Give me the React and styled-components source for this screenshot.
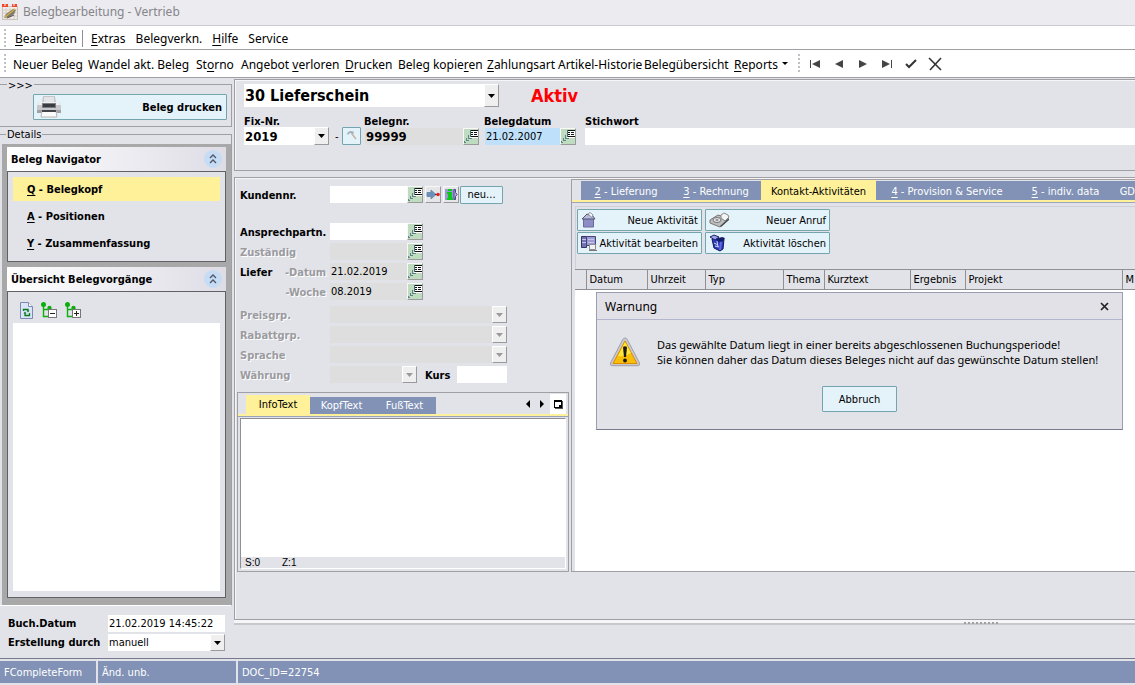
import React, { useState } from "react";
import styled, { createGlobalStyle } from "styled-components";

const menuItems = ["_Bearbeiten", "_Extras", "Belegverkn.", "_Hilfe", "Service"];

const toolItems = [
  { label: "Neuer Beleg", width: 75 },
  { label: "Wa_ndel akt. Beleg", width: 108 },
  { label: "St_orno", width: 45 },
  { label: "Angebot _verloren", width: 104 },
  { label: "_Drucken", width: 53 },
  { label: "Beleg kopie_ren", width: 89 },
  { label: "_Zahlungsart", width: 71 },
  { label: "Artikel-Historie", width: 86 },
  { label: "Belegübersicht", width: 90 },
];

const navItems = ["_Q - Belegkopf", "_A - Positionen", "_Y - Zusammenfassung"];

const tabItems = [
  { label: "_2 - Lieferung", width: 90 },
  { label: "_3 - Rechnung", width: 90 },
  { label: "Kontakt-Aktivitäten", width: 115 },
  { label: "_4 - Provision & Service", width: 142 },
  { label: "_5 - indiv. data", width: 95 },
  { label: "GD" },
];

const columns = [
  { label: "", width: 11 },
  { label: "Datum", width: 61 },
  { label: "Uhrzeit", width: 58 },
  { label: "Typ", width: 78 },
  { label: "Thema", width: 41 },
  { label: "Kurztext", width: 86 },
  { label: "Ergebnis", width: 55 },
  { label: "Projekt", width: 157 },
  { label: "M" },
];

// underlines the letter that follows "_"
function Accel({ text }) {
  const at = text.indexOf("_");
  if (at < 0) return <span>{text}</span>;
  return (
    <span>
      {text.slice(0, at)}
      <u>{text[at + 1]}</u>
      {text.slice(at + 2)}
    </span>
  );
}

function AppIcon() {
  return (
    <svg width="16" height="16" viewBox="0 0 16 16" aria-hidden="true">
      <path d="M0 2h16v14H0z" fill="#c9c2bb" />
      <path d="M1 3h14v12H1z" fill="#efebe6" />
      <path d="M0 0h6v3H0zM10 0h5v3h-5z" fill="#f04a2a" />
      <path d="M3 0v2M12 0v2" stroke="#fff" />
      <path d="M1 6h14M1 9h14M1 12h14M4 4v11M8 4v11M12 4v11" stroke="#d6cec6" />
      <path d="M2 14l2-4 7-5 3 1-2 4-5 3z" fill="#7d7a70" />
      <path d="M3 13l5-4 5-4" stroke="#d6b13c" strokeWidth="1.500" fill="none" />
      <path d="M5 14l7-3" stroke="#55504a" />
    </svg>
  );
}

function PrinterIcon() {
  return (
    <svg width="24" height="22" viewBox="0 0 24 22" aria-hidden="true">
      <path d="M6 0h12l1 7H5z" fill="#c4c6ca" />
      <path d="M7 1h10v5H7z" fill="#e2e4e7" />
      <path d="M2 6h20l2 4v6H0v-6z" fill="#c6c8cb" />
      <path d="M2 6h20l1 3H1z" fill="#eff0f2" />
      <path d="M5 7h14v5H5z" fill="#7a7d83" />
      <path d="M6 8h12v3H6z" fill="#3a3c41" />
      <path d="M0 14h24v3H0z" fill="#9fa1a5" />
      <path d="M5 15h14l1 6H4z" fill="#fbfbfc" stroke="#b4b6ba" />
      <path d="M5 14h14v2H5z" fill="#43464c" />
    </svg>
  );
}

function LookupIcon() {
  return (
    <svg width="14" height="15" viewBox="0 0 14 15" shapeRendering="crispEdges" aria-hidden="true">
      <path d="M6 1h8v8H6z" fill="#fff" />
      <path d="M6 1h8v1H6zM7 3h2v1H7zM10 3h3v1h-3zM7 5h2v1H7zM10 5h3v1h-3zM6 7h8v1H6z" fill="#111" />
      <path d="M6 1h1v7H6z" fill="#4a6c70" />
      <path d="M4 6h1v4H4zM5 9h3v1H5zM2 9h1v3H2zM3 11h2v1H3zM0 12h1v2H0zM1 13h1v1H1z" fill="#5d8588" />
    </svg>
  );
}

function ArrowDotIcon() {
  return (
    <svg width="14" height="15" viewBox="0 0 14 15" aria-hidden="true">
      <path d="M1 5.500h4V3l5 4.500-5 4.500V9.500H1z" fill="#6b8fb8" stroke="#6f8fb0" />
      <path d="M9 7.500h3" stroke="#333" />
      <circle cx="12" cy="7.500" r="1.800" fill="#d22" />
    </svg>
  );
}

function InfoIcon() {
  return (
    <svg width="14" height="15" viewBox="0 0 14 15" aria-hidden="true">
      <path d="M1 2h9v11H1z" fill="#9a99d0" />
      <path d="M10 2.500h1.500v3l1.500 2-1.500 2v3H10z" fill="#b8b8e4" stroke="#444488" />
      <path d="M4 2h4v2H4zM3 5h5v6h1v2H3v-2h1V7H3z" fill="#0cc81c" />
    </svg>
  );
}

function ToolIcon() {
  return (
    <svg width="12" height="12" viewBox="0 0 12 12" aria-hidden="true">
      <path d="M1 4q1-3 4-3 3 0 3 2L6 5 5 3Q3 3 2 5z" fill="#a3b4bc" />
      <path d="M6 4l4 5" stroke="#c4b4a6" strokeWidth="1.500" />
    </svg>
  );
}

function ChevronsUp() {
  return (
    <svg width="8" height="10" viewBox="0 0 8 10" aria-hidden="true">
      <path d="M1 4l3-3 3 3M1 9l3-3 3 3" fill="none" stroke="#4b5668" strokeWidth="1.300" />
    </svg>
  );
}

function RefreshDocIcon() {
  return (
    <svg width="13" height="17" viewBox="0 0 13 17" aria-hidden="true">
      <path d="M.5.5h8l4 4v12H.5z" fill="#d9e5f8" stroke="#7e88b0" />
      <path d="M8.500.5v4h4" fill="#fff" stroke="#7e88b0" />
      <path d="M3.500 9V7.500H8V9M9.500 11v2.500H5V11" fill="none" stroke="#0b7a1c" strokeWidth="1.300" />
      <path d="M6.500 8.500h3L8 10.500zM3.500 11.500h3L5 9.500z" fill="#0b7a1c" />
    </svg>
  );
}

function TreeIcon({ plus }) {
  return (
    <svg width="16" height="17" viewBox="0 0 16 17" aria-hidden="true">
      <path d="M2.500 3v11.500H7M2.500 7.500H8" stroke="#0fae0f" strokeWidth="1.400" fill="none" />
      <circle cx="2.500" cy="2.500" r="2.500" fill="#0fae0f" />
      <circle cx="8.500" cy="6" r="2.200" fill="#0fae0f" />
      <rect x="7.500" y="7.500" width="8" height="8" fill="#fff" stroke="#777" />
      <path d="M9 11.500h5" stroke="#222" />
      {plus && <path d="M11.500 9v5" stroke="#222" />}
    </svg>
  );
}

function NewTaskIcon() {
  return (
    <svg width="16" height="18" viewBox="0 0 16 18" aria-hidden="true">
      <path d="M2.500 7h10v9h-10z" fill="#8d8dc6" stroke="#6a6aa0" />
      <path d="M1 8l5-5 2 1h3l3 4H4z" fill="#b9bbdc" stroke="#50546c" />
      <path d="M7 3l2-1.500 3 2.500-1 2.500z" fill="#fff" stroke="#8b8fa5" />
    </svg>
  );
}

function EditTaskIcon() {
  return (
    <svg width="16" height="18" viewBox="0 0 16 18" aria-hidden="true">
      <path d="M.5 2.500h5v11h-5z" fill="#7474b4" stroke="#33335f" />
      <path d="M5.500 2.500h9v9h-9z" fill="#9c9cd2" stroke="#444478" />
      <path d="M1 5.500h4M1 8.500h4M7 5.500h6M7 8.500h6" stroke="#c4c4ec" />
      <path d="M8.500 10.500h6v5h-6z" fill="#f3f3f3" stroke="#8b8b90" />
      <path d="M8 16.500h8" stroke="#777" />
    </svg>
  );
}

function PhoneIcon() {
  return (
    <svg width="21" height="18" viewBox="0 0 21 18" aria-hidden="true">
      <path d="M1 9l8-5 9 3v3l-7 6L1 12z" fill="#bdbdbd" stroke="#777" />
      <path d="M12 4l3-2 4 2 1 2-4 4-4-3z" fill="#f4f4f4" stroke="#888" />
      <ellipse cx="8" cy="9" rx="4" ry="2.500" fill="#e4e4e4" stroke="#777" />
      <ellipse cx="8" cy="9" rx="1.500" ry="1" fill="#888" />
      <path d="M11 15l9-8v2l-8 7z" fill="#4a4a4a" />
    </svg>
  );
}

function BinIcon() {
  return (
    <svg width="18" height="18" viewBox="0 0 18 18" aria-hidden="true">
      <path d="M3 5l2 9 6 3 3-2 1-10-6-1z" fill="#2c39b8" stroke="#131a5c" />
      <path d="M1 3l4-2 5 2-4 3z" fill="#9aa1e4" stroke="#1c2470" />
      <path d="M7 5l6-2 3 1-2 3-5 1z" fill="#141c68" />
      <path d="M5 9l4 2M6 12l4 1M8 7l1 6" stroke="#cdd4ff" />
      <path d="M12 8l-1 8" stroke="#5b68e4" strokeWidth="2" />
    </svg>
  );
}

function WarningIcon() {
  return (
    <svg width="32" height="30" viewBox="0 0 32 30" aria-hidden="true">
      <path d="M16 1q1.500 0 2.300 1.600L30.500 26q.8 2.500-1.500 2.700H3Q.7 28.500 1.500 26L13.700 2.600Q14.500 1 16 1z" fill="#c9c9cc" stroke="#a0a0a6" />
      <path d="M16 4L28 26.500H4z" fill="#f8bf08" stroke="#e08a00" />
      <path d="M16 5l6 11q-6 4-13 3z" fill="#ffe83a" />
      <path d="M14 10q2-1.500 4 0l-1 10h-2z" fill="#1c1c1c" />
      <circle cx="16" cy="23.500" r="1.900" fill="#1c1c1c" />
    </svg>
  );
}

function NavIcon({ kind }) {
  const shapes = {
    first: <path d="M3 4h1v8H3zM5 8l8-4v8z" fill="#444" />,
    prev: <path d="M4 8l8-4v8z" fill="#444" />,
    next: <path d="M4 4l8 4-8 4z" fill="#444" />,
    last: <path d="M3 4l8 4-8 4zM12 4h1v8h-1z" fill="#444" />,
    ok: <path d="M3 8l3 3 7-7" fill="none" stroke="#333" strokeWidth="2" />,
    cancel: (
      <g fill="none" stroke="#333" strokeWidth="1.600">
        <path d="M2 2l12 12" />
        <path d="M14 2L3 14" />
      </g>
    ),
  };
  return (
    <svg width="16" height="16" viewBox="0 0 16 16" aria-hidden="true">
      {shapes[kind]}
    </svg>
  );
}

function Combo({ label, value, disabled, width, height, size, bold }) {
  return (
    <ComboBox $width={width} $height={height}>
      <ComboSelect aria-label={label} disabled={disabled} $size={size} $bold={bold}>
        <option>{value}</option>
      </ComboSelect>
      <ComboArrow>
        <svg width="7" height="4" viewBox="0 0 7 4" aria-hidden="true">
          <path d="M0 0h7L3.500 4z" fill={disabled ? "#9a9a9a" : "#000"} />
        </svg>
      </ComboArrow>
    </ComboBox>
  );
}

function Lookup({ label }) {
  return (
    <LookupButton type="button" aria-label={label}>
      <LookupIcon />
    </LookupButton>
  );
}

function App() {
  const [nav, setNav] = useState(0);
  const [tab, setTab] = useState(2);
  const [open, setOpen] = useState(true);

  return (
    <Page>
      <GlobalStyle />
      <TitleBar>
        <AppIcon />
        <h1>Belegbearbeitung - Vertrieb</h1>
      </TitleBar>
      <MenuBar>
        <Grip />
        {menuItems.map((item, i) => (
          <React.Fragment key={item}>
            <MenuItem type="button">
              <Accel text={item} />
            </MenuItem>
            {i === 0 && <MenuDivider />}
          </React.Fragment>
        ))}
      </MenuBar>
      <ToolBar>
        <Grip />
        {toolItems.map((item) => (
          <ToolItem key={item.label} type="button" $width={item.width}>
            <Accel text={item.label} />
          </ToolItem>
        ))}
        <ToolItem type="button" $width={64}>
          <Accel text="_Reports" />
          <svg width="6" height="4" viewBox="0 0 6 4" aria-hidden="true">
            <path d="M0 0h6L3 3z" />
          </svg>
        </ToolItem>
        <Grip />
        <RecordNav>
          {["first", "prev", "next", "last", "ok", "cancel"].map((kind) => (
            <button key={kind} type="button" aria-label={kind}>
              <NavIcon kind={kind} />
            </button>
          ))}
        </RecordNav>
      </ToolBar>

      <Main>
        <Side>
          <PrintGroup>
            <legend>&gt;&gt;&gt;</legend>
            <PrintButton type="button">
              <PrinterIcon />
              Beleg drucken
            </PrintButton>
          </PrintGroup>
          <DetailGroup>
            <legend>Details</legend>
            <Explorer>
              <section>
                <GroupHead>
                  <h2>Beleg Navigator</h2>
                  <button type="button" aria-label="Einklappen">
                    <ChevronsUp />
                  </button>
                </GroupHead>
                <NavBody>
                  {navItems.map((item, i) => (
                    <NavItem
                      key={item}
                      type="button"
                      $active={nav === i}
                      onClick={() => setNav(i)}
                    >
                      <Accel text={item} />
                    </NavItem>
                  ))}
                </NavBody>
              </section>
              <TreeSection>
                <GroupHead>
                  <h2>Übersicht Belegvorgänge</h2>
                  <button type="button" aria-label="Einklappen">
                    <ChevronsUp />
                  </button>
                </GroupHead>
                <TreeBody>
                  <TreeTools>
                    <button type="button" aria-label="Aktualisieren">
                      <RefreshDocIcon />
                    </button>
                    <button type="button" aria-label="Zuklappen">
                      <TreeIcon />
                    </button>
                    <button type="button" aria-label="Aufklappen">
                      <TreeIcon plus />
                    </button>
                  </TreeTools>
                  <TreeBox />
                </TreeBody>
              </TreeSection>
            </Explorer>
          </DetailGroup>
          <SideFooter>
            <Label htmlFor="buch">Buch.Datum</Label>
            <Field id="buch" defaultValue="21.02.2019 14:45:22" />
            <Label as="span">Erstellung durch</Label>
            <Combo label="Erstellung durch" value="manuell" height={17} />
          </SideFooter>
        </Side>

        <Content>
          <HeadPanel>
            <HeadRow>
              <Combo label="Belegart" value="30 Lieferschein" width={255} height={23} size={16} bold />
              <State>Aktiv</State>
            </HeadRow>
            <HeadFields>
              <Label as="span">Fix-Nr.</Label>
              <span />
              <Label htmlFor="nr">Belegnr.</Label>
              <Label htmlFor="datum">Belegdatum</Label>
              <Label htmlFor="stich">Stichwort</Label>
              <Combo label="Fix-Nr." value="2019" height={18} size={13} bold />
              <DashCell>
                <span>-</span>
                <SmallButton type="button" aria-label="Nummer ändern">
                  <ToolIcon />
                </SmallButton>
              </DashCell>
              <FieldCell $end={5}>
                <Field id="nr" defaultValue="99999" $tone="grey" $bold />
                <Lookup label="Belegnr. suchen" />
              </FieldCell>
              <FieldCell $end={9}>
                <Field id="datum" defaultValue="21.02.2007" $tone="blue" />
                <Lookup label="Datum wählen" />
              </FieldCell>
              <Field id="stich" />
            </HeadFields>
          </HeadPanel>

          <WorkPanel>
            <LeftPane>
              <Form>
                <FormRow $gap={20}>
                  <Label htmlFor="kunde">Kundennr.</Label>
                  <Field id="kunde" $width={77} />
                  <Lookup label="Kunde suchen" />
                  <FlatButton type="button" aria-label="Gehe zu">
                    <ArrowDotIcon />
                  </FlatButton>
                  <FlatButton type="button" aria-label="Info">
                    <InfoIcon />
                  </FlatButton>
                  <NewButton type="button">neu...</NewButton>
                </FormRow>
                <FormRow>
                  <Label htmlFor="partner">Ansprechpartn.</Label>
                  <Field id="partner" $width={77} />
                  <Lookup label="Ansprechpartner suchen" />
                </FormRow>
                <FormRow>
                  <Label htmlFor="zust" $muted>Zuständig</Label>
                  <Field id="zust" $width={77} $tone="grey" />
                  <Lookup label="Zuständig suchen" />
                </FormRow>
                <FormRow>
                  <SplitLabel>
                    <Label as="span">Liefer</Label>
                    <Label htmlFor="ldatum" $muted>-Datum</Label>
                  </SplitLabel>
                  <Field id="ldatum" defaultValue="21.02.2019" $width={77} $tone="grey" />
                  <Lookup label="Lieferdatum wählen" />
                </FormRow>
                <FormRow $gap={6}>
                  <SplitLabel>
                    <span />
                    <Label htmlFor="woche" $muted>-Woche</Label>
                  </SplitLabel>
                  <Field id="woche" defaultValue="08.2019" $width={77} $tone="grey" />
                  <Lookup label="Woche wählen" />
                </FormRow>
                {["Preisgrp.", "Rabattgrp.", "Sprache"].map((name) => (
                  <FormRow key={name}>
                    <Label as="span" $muted>{name}</Label>
                    <Combo label={name} disabled width={177} height={17} />
                  </FormRow>
                ))}
                <FormRow>
                  <Label as="span" $muted>Währung</Label>
                  <Combo label="Währung" disabled width={87} height={17} />
                  <RateLabel htmlFor="kurs">Kurs</RateLabel>
                  <Field id="kurs" $width={50} />
                </FormRow>
              </Form>

              <MemoPanel>
                <MemoTabs>
                  <MemoTab type="button" $active>InfoText</MemoTab>
                  <MemoTab type="button">KopfText</MemoTab>
                  <MemoTab type="button">FußText</MemoTab>
                  <MemoTools>
                    <MemoArrow type="button" aria-label="Zurück">
                      <svg width="5" height="8" viewBox="0 0 5 8"><path d="M4 0v8L0 4z" /></svg>
                    </MemoArrow>
                    <MemoArrow type="button" aria-label="Weiter">
                      <svg width="5" height="8" viewBox="0 0 5 8"><path d="M1 0v8l4-4z" /></svg>
                    </MemoArrow>
                    <MemoPage type="button" aria-label="Vergrößern">
                      <svg width="9" height="9" viewBox="0 0 9 9" shapeRendering="crispEdges">
                        <path d="M0 0h8v8H0z" />
                        <path d="M1 2h6v3H5v2H1z" fill="#fff" />
                        <path d="M8 1h1v8H1V8h7z" fill="#555" />
                      </svg>
                    </MemoPage>
                  </MemoTools>
                </MemoTabs>
                <MemoBody>
                  <textarea aria-label="InfoText" />
                  <MemoStatus>
                    <span>S:0</span>
                    <span>Z:1</span>
                  </MemoStatus>
                </MemoBody>
              </MemoPanel>
            </LeftPane>

            <RightPane>
              <Tabs>
                {tabItems.map((item, i) => (
                  <Tab
                    key={item.label}
                    type="button"
                    $active={tab === i}
                    $width={item.width}
                    onClick={() => setTab(i)}
                  >
                    <Accel text={item.label} />
                  </Tab>
                ))}
              </Tabs>
              <Actions>
                <ActionButton type="button">
                  <NewTaskIcon />
                  Neue Aktivität
                </ActionButton>
                <ActionButton type="button">
                  <PhoneIcon />
                  Neuer Anruf
                </ActionButton>
                <ActionButton type="button">
                  <EditTaskIcon />
                  Aktivität bearbeiten
                </ActionButton>
                <ActionButton type="button">
                  <BinIcon />
                  Aktivität löschen
                </ActionButton>
              </Actions>
              <TableArea>
                <Table>
                  <colgroup>
                    {columns.map((col) => (
                      <Col key={col.label} $width={col.width} />
                    ))}
                  </colgroup>
                  <thead>
                    <tr>
                      {columns.map((col) => (
                        <th key={col.label}>{col.label}</th>
                      ))}
                    </tr>
                  </thead>
                  <tbody />
                </Table>
                {open && (
                  <Dialog role="dialog" aria-labelledby="warn">
                    <DialogTitle>
                      <h2 id="warn">Warnung</h2>
                      <button type="button" aria-label="Schließen" onClick={() => setOpen(false)}>
                        <svg width="9" height="9" viewBox="0 0 9 9">
                          <path d="M1 1l7 7M8 1L1 8" stroke="#222" strokeWidth="1.700" />
                        </svg>
                      </button>
                    </DialogTitle>
                    <DialogBody>
                      <WarningIcon />
                      <p>
                        Das gewählte Datum liegt in einer bereits abgeschlossenen Buchungsperiode!
                        <br />
                        Sie können daher das Datum dieses Beleges nicht auf das gewünschte Datum stellen!
                      </p>
                    </DialogBody>
                    <CancelButton type="button" onClick={() => setOpen(false)}>
                      Abbruch
                    </CancelButton>
                  </Dialog>
                )}
              </TableArea>
            </RightPane>
          </WorkPanel>
          <Splitter>
            <SplitterGrip />
          </Splitter>
        </Content>
      </Main>

      <StatusBar>
        <StatusCell $width={96}>FCompleteForm</StatusCell>
        <StatusCell $width={138}>Änd. unb.</StatusCell>
        <StatusCell>DOC_ID=22754</StatusCell>
      </StatusBar>
    </Page>
  );
}

export default App;

const GlobalStyle = createGlobalStyle`
  * {
    box-sizing: border-box;
  }

  body {
    margin: 0;
    color: #000;
    background: #e2e3e8;
    font-family: "DejaVu Sans Condensed", "Noto Sans", sans-serif;
    font-size: 11px;
  }

  button, input, select, textarea {
    margin: 0;
    padding: 0;
    border: 0;
    border-radius: 0;
    color: inherit;
    background: none;
    font: inherit;
  }

  h1, h2, p {
    margin: 0;
    font: inherit;
  }

  svg {
    display: block;
    flex: none;
  }

  u {
    text-underline-offset: 2px;
  }
`;

const Page = styled.div`
  display: flex;
  flex-direction: column;
  min-height: 100vh;
  overflow: hidden;
`;

const TitleBar = styled.header`
  display: flex;
  align-items: center;
  gap: 5px;
  height: 26px;
  padding: 0 2px 2px;
  background: #ecebf0;
  border-bottom: 1px solid #cccbd2;

  h1 {
    color: #858589;
    font-family: "Noto Sans", sans-serif;
    font-size: 12px;
  }
`;

const Bar = styled.nav`
  display: flex;
  align-items: center;
  padding-left: 4px;
  background: #fff;
  border-bottom: 1px solid #a0a0a4;
  font-family: "Noto Sans", sans-serif;
  font-size: 12px;
  white-space: nowrap;
`;

const MenuBar = styled(Bar)`
  height: 24px;
  padding-top: 2px;
`;

const ToolBar = styled(Bar)`
  height: 28px;
  padding-top: 1px;
`;

const Grip = styled.span`
  flex: none;
  width: 2px;
  height: 20px;
  margin-right: 7px;
  background: repeating-linear-gradient(#c0c0c4 0 2px, transparent 2px 4px);
`;

const MenuItem = styled.button`
  margin-right: 10px;

  &:nth-child(2) {
    margin-left: 2px;
  }
`;

const MenuDivider = styled.span`
  width: 1px;
  height: 17px;
  margin: 0 8px 0 -5px;
  background: #8f8f94;
`;

const ToolItem = styled.button`
  display: flex;
  flex: none;
  align-items: center;
  gap: 4px;
  width: ${(p) => p.$width}px;
`;

const RecordNav = styled.div`
  display: flex;
  gap: 8px;
`;

const Main = styled.main`
  display: flex;
  flex: 1;
`;

const Side = styled.aside`
  display: flex;
  flex: none;
  flex-direction: column;
  width: 232px;
`;

const Group = styled.fieldset`
  min-width: 0;
  margin: 0;
  border: 1px solid #a0a0a4;
  border-left: 0;

  legend {
    padding: 2px 1px 0;
    line-height: 8px;
  }
`;

const PrintGroup = styled(Group)`
  padding: 4px 4px 6px 33px;

  legend {
    margin-left: -26px;
    padding-top: 4px;
  }
`;

const DetailGroup = styled(Group)`
  display: flex;
  flex: 1;
  flex-direction: column;
  margin-top: 2px;
  padding: 5px 0 0 2px;
  border-bottom-color: #fff;

  legend {
    margin-left: 4px;
  }
`;

const OutlineButton = styled.button`
  background: #e4f2fa;
  border: 1px solid #74a4ae;
  border-radius: 1px;
`;

const PrintButton = styled(OutlineButton)`
  display: flex;
  align-items: center;
  justify-content: space-between;
  width: 100%;
  height: 26px;
  padding: 0 4px 0 3px;
  font-weight: bold;
`;

const Explorer = styled.div`
  display: flex;
  flex: 1;
  flex-direction: column;
  gap: 5px;
  padding: 3px 5px 7px;
  background: #a8a8a8;
`;

const GroupHead = styled.div`
  display: flex;
  align-items: center;
  justify-content: space-between;
  height: 24px;
  padding: 0 4px;
  background: linear-gradient(90deg, #fff, #dedde6);

  h2 {
    font-weight: bold;
  }

  button {
    display: grid;
    place-items: center;
    width: 18px;
    height: 18px;
    background: #c6dcf4;
    border-radius: 50%;
  }
`;

const GroupBody = styled.div`
  display: flex;
  flex-direction: column;
  background: #e2e3e8;
  border: 1px solid #606066;
`;

const NavBody = styled(GroupBody)`
  gap: 3px;
  padding: 5px 5px 6px;
`;

const NavItem = styled.button`
  height: 24px;
  padding: 1px 0 0 14px;
  background: ${(p) => (p.$active ? "#fff09a" : "transparent")};
  font-weight: bold;
  text-align: left;
`;

const TreeSection = styled.section`
  display: flex;
  flex: 1;
  flex-direction: column;
`;

const TreeBody = styled(GroupBody)`
  flex: 1;
  padding: 10px 5px 6px;
`;

const TreeTools = styled.div`
  display: flex;
  gap: 8px;
  height: 21px;
  padding-left: 7px;

  button {
    height: 17px;
  }
`;

const TreeBox = styled.div`
  flex: 1;
  background: #fff;
`;

const SideFooter = styled.div`
  display: grid;
  grid-template-columns: 100px 117px;
  gap: 2px 0;
  align-items: center;
  height: 52px;
  padding: 9px 0 7px 8px;
`;

const Label = styled.label`
  color: ${(p) => (p.$muted ? "#9b9ba0" : "#000")};
  font-weight: bold;
  text-shadow: ${(p) => (p.$muted ? "1px 1px #fff" : "none")};
  white-space: nowrap;
`;

const tones = { grey: "#dedede", blue: "#bfe0fb" };

const Field = styled.input`
  flex: ${(p) => (p.$width ? "none" : "1")};
  width: ${(p) => (p.$width ? `${p.$width}px` : "100%")};
  min-width: 0;
  height: 17px;
  padding: 0 1px;
  background: ${(p) => tones[p.$tone] || "#fff"};
  font-size: ${(p) => (p.$bold ? 13 : 11)}px;
  font-weight: ${(p) => (p.$bold ? "bold" : "normal")};
`;

const ComboBox = styled.div`
  position: relative;
  width: ${(p) => (p.$width ? `${p.$width}px` : "100%")};
  height: ${(p) => p.$height}px;
`;

const ComboSelect = styled.select`
  display: block;
  width: 100%;
  height: 100%;
  padding-left: 1px;
  color: #000;
  background: #fff;
  font-size: ${(p) => p.$size || 11}px;
  font-weight: ${(p) => (p.$bold ? "bold" : "normal")};
  appearance: none;

  &:disabled {
    background: #dedede;
    opacity: 1;
  }
`;

const ComboArrow = styled.span`
  position: absolute;
  top: 0;
  right: 0;
  bottom: 0;
  display: grid;
  place-items: center;
  width: 15px;
  background: #efefef;
  border: 1px solid #fff;
  border-right-color: #9a9a9a;
  border-bottom-color: #9a9a9a;
  pointer-events: none;
`;

const FlatButton = styled.button`
  display: grid;
  flex: none;
  place-items: center;
  width: 16px;
  height: 17px;
  margin-left: 2px;
  background: #e6e6e8;
  border: 1px solid #f8f8f8;
  border-right-color: #9a9a9a;
  border-bottom-color: #9a9a9a;
`;

const LookupButton = styled(FlatButton)`
  margin-left: 0;
  background: #bfdcc0;
`;

const Content = styled.div`
  display: flex;
  flex: 1;
  flex-direction: column;
  min-width: 0;
  padding: 1px 0 0 2px;
`;

const Panel = styled.section`
  border: 1px solid #a0a0a4;
  border-right: 0;
  box-shadow: inset 1px 1px #f6f6f8;
`;

const HeadPanel = styled(Panel)`
  height: 92px;
  padding: 4px 0 0 9px;
`;

const HeadRow = styled.div`
  display: flex;
  align-items: center;
  gap: 32px;
`;

const State = styled.strong`
  color: #f00;
  font-size: 18px;
  line-height: 22px;
`;

const HeadFields = styled.div`
  display: grid;
  grid-template-columns: 85px 35px 120px 101px 1fr;
  align-items: center;
  margin-top: 9px;

  > label, > span {
    line-height: 11px;
  }
`;

const DashCell = styled.div`
  display: flex;
  align-items: center;
  justify-content: space-between;
  padding: 0 3px 0 6px;
`;

const SmallButton = styled(OutlineButton)`
  display: grid;
  place-items: center;
  width: 19px;
  height: 18px;
`;

const FieldCell = styled.div`
  display: flex;
  padding-right: ${(p) => p.$end}px;
  padding-left: 1px;
`;

const WorkPanel = styled(Panel)`
  display: flex;
  flex: 1;
  margin-top: 6px;
  padding: 1px 0 47px 2px;
`;

const LeftPane = styled.div`
  display: flex;
  flex: none;
  flex-direction: column;
  width: 332px;
`;

const Form = styled.div`
  display: flex;
  flex-direction: column;
  padding: 7px 0 6px 3px;
`;

const FormRow = styled.div`
  display: flex;
  align-items: center;
  height: 17px;
  margin-bottom: ${(p) => p.$gap || 3}px;

  > :first-child {
    width: 90px;
    padding-top: 2px;
  }
`;

const SplitLabel = styled.span`
  display: flex;
  justify-content: space-between;
  padding-right: 4px;
`;

const RateLabel = styled(Label)`
  width: 40px;
  padding-top: 2px;
  padding-left: 8px;
`;

const NewButton = styled(OutlineButton)`
  width: 43px;
  height: 18px;
  margin-left: 1px;
`;

const MemoPanel = styled.section`
  display: flex;
  flex: 1;
  flex-direction: column;
  border: 1px solid #a0a0a4;
`;

const MemoTabs = styled.div`
  display: flex;
  align-items: flex-end;
  height: 23px;
  padding-left: 8px;
  border-bottom: 2px solid #fff09a;
  box-shadow: 0 1px #9aa4bc;
`;

const MemoTab = styled.button`
  width: ${(p) => (p.$active ? 64 : 63)}px;
  height: ${(p) => (p.$active ? 19 : 17)}px;
  color: ${(p) => (p.$active ? "#000" : "#fff")};
  background: ${(p) => (p.$active ? "#fff09a" : "#8192b6")};
`;

const MemoTools = styled.div`
  display: flex;
  align-items: center;
  gap: 4px;
  height: 20px;
  margin-left: auto;
`;

const MemoArrow = styled.button`
  display: grid;
  place-items: center;
  width: 9px;
  height: 20px;
`;

const MemoPage = styled.button`
  display: grid;
  place-items: center;
  width: 16px;
  height: 20px;
  margin-right: 2px;
  background: #fff;
`;

const MemoBody = styled.div`
  display: flex;
  flex: 1;
  flex-direction: column;
  margin: 2px;
  border: 1px solid #fff;
  border-top-color: #909094;
  border-left-color: #909094;

  textarea {
    flex: 1;
    background: #fff;
    resize: none;
  }
`;

const MemoStatus = styled.div`
  display: flex;
  gap: 22px;
  padding-left: 4px;
  font-family: "Liberation Sans", sans-serif;
  font-size: 10px;
  line-height: 11px;
`;

const RightPane = styled.div`
  display: flex;
  flex: 1;
  flex-direction: column;
  min-width: 0;
  margin-left: 2px;
  padding-left: 3px;
  border: 1px solid #a0a0a4;
  border-right: 0;
  overflow: hidden;
`;

const Tabs = styled.div`
  display: flex;
  align-items: flex-end;
  height: 22px;
  margin-left: -3px;
  padding-left: 9px;
  border-bottom: 2px solid #fff09a;
  box-shadow: 0 1px #9aa4bc;
`;

const Tab = styled.button`
  flex: ${(p) => (p.$width ? "none" : "1")};
  width: ${(p) => (p.$width ? `${p.$width}px` : "auto")};
  height: ${(p) => (p.$active ? 20 : 19)}px;
  padding-top: 2px;
  color: ${(p) => (p.$active ? "#000" : "#fff")};
  background: ${(p) => (p.$active ? "#fff09a" : "#8192b6")};
  text-align: ${(p) => (p.$width ? "center" : "right")};
  white-space: nowrap;
`;

const Actions = styled.div`
  display: grid;
  grid-template-columns: 125px 125px;
  grid-auto-rows: 22px;
  gap: 1px 3px;
  height: 63px;
  margin-top: 4px;
  padding: 2px 1px;
  border-top: 1px solid #cdcfdb;
  border-left: 1px solid #cdcfdb;
`;

const ActionButton = styled(OutlineButton)`
  display: flex;
  align-items: center;
  justify-content: space-between;
  padding: 0 3px;
  white-space: nowrap;
`;

const TableArea = styled.div`
  position: relative;
  flex: 1;
  background: #fff;
  border-top: 1px solid #909094;
`;

const Table = styled.table`
  width: 100%;
  border-collapse: collapse;
  table-layout: fixed;

  th {
    height: 19px;
    padding: 0 0 0 3px;
    overflow: hidden;
    background: #e2e3e8;
    border-right: 1px solid #909094;
    border-bottom: 1px solid #909094;
    font-weight: normal;
    text-align: left;
    white-space: nowrap;
  }

  th:last-child {
    border-right: 0;
  }
`;

const Col = styled.col`
  width: ${(p) => (p.$width ? `${p.$width}px` : "auto")};
`;

const Dialog = styled.div`
  position: absolute;
  top: 22px;
  right: 12px;
  left: 21px;
  padding-bottom: 17px;
  background: #e2e3e8;
  border: 1px solid #9b9db3;
  border-bottom-color: #77798c;
`;

const DialogTitle = styled.div`
  display: flex;
  align-items: center;
  justify-content: space-between;
  height: 27px;
  padding: 0 13px 0 8px;
  background: #e3e1e8;
  border-bottom: 1px solid #b3b6cc;

  h2 {
    font-family: "Noto Sans", sans-serif;
    font-size: 12px;
  }
`;

const DialogBody = styled.div`
  display: flex;
  gap: 16px;
  padding: 17px 12px 19px;

  p {
    font-family: "Noto Sans", sans-serif;
    font-size: 11px;
    line-height: 15px;
    white-space: nowrap;
  }
`;

const CancelButton = styled(OutlineButton)`
  display: block;
  width: 75px;
  height: 26px;
  margin: 0 auto;
`;

const Splitter = styled.div`
  display: flex;
  justify-content: flex-end;
  height: 38px;
  padding: 2px 137px 0 0;
  background: linear-gradient(#f6f6f8 0 3px, #c8c8cc 3px 5px, #e2e3e8 5px);
`;

const SplitterGrip = styled.span`
  width: 34px;
  height: 2px;
  background: repeating-linear-gradient(90deg, #a0a0a4 0 2px, transparent 2px 4px);
`;

const StatusBar = styled.footer`
  display: flex;
  gap: 2px;
  height: 27px;
  padding: 2px 0;
  border-top: 1px solid #77798c;
  color: #fff;
`;

const StatusCell = styled.div`
  flex: ${(p) => (p.$width ? "none" : "1")};
  width: ${(p) => (p.$width ? `${p.$width}px` : "auto")};
  padding-left: 4px;
  background: #8192b6;
  line-height: 23px;
`;
